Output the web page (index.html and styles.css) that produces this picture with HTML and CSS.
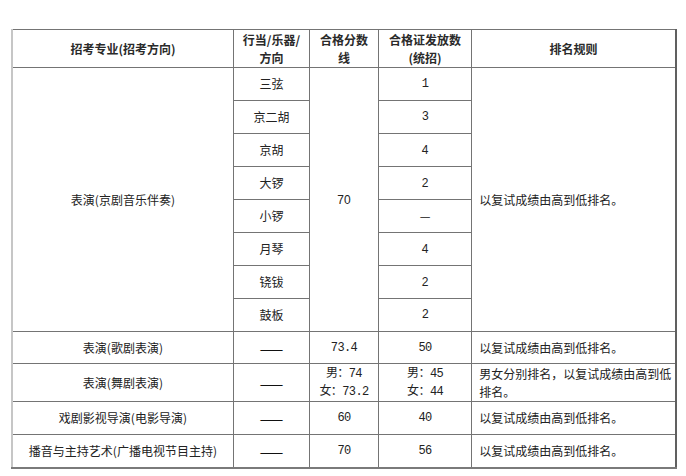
FILE: index.html
```html
<!DOCTYPE html>
<html lang="zh">
<head>
<meta charset="utf-8">
<link rel="stylesheet" href="styles.css">
</head>
<body>
<table class="grid">
  <colgroup>
    <col class="c1"><col class="c2"><col class="c3"><col class="c4"><col class="c5">
  </colgroup>
  <thead>
    <tr class="head">
      <th>招考专业(招考方向)</th>
      <th>行当/乐器/<br>方向</th>
      <th>合格分数<br>线</th>
      <th>合格证发放数<br>(统招)</th>
      <th>排名规则</th>
    </tr>
  </thead>
  <tbody>
    <tr class="sub">
      <td rowspan="8">表演(京剧音乐伴奏)</td>
      <td>三弦</td>
      <td rowspan="8" class="sans">70</td>
      <td class="num">1</td>
      <td rowspan="8" class="rule">以复试成绩由高到低排名。</td>
    </tr>
    <tr class="sub"><td>京二胡</td><td class="num">3</td></tr>
    <tr class="sub"><td>京胡</td><td class="sans">4</td></tr>
    <tr class="sub"><td>大锣</td><td class="sans">2</td></tr>
    <tr class="sub"><td>小锣</td><td class="dash">—</td></tr>
    <tr class="sub"><td>月琴</td><td class="sans">4</td></tr>
    <tr class="sub"><td>铙钹</td><td class="sans">2</td></tr>
    <tr class="sub"><td>鼓板</td><td class="num">2</td></tr>
    <tr class="r32">
      <td>表演(歌剧表演)</td>
      <td class="dash long">——</td>
      <td class="num">73.4</td>
      <td class="num">50</td>
      <td class="rule">以复试成绩由高到低排名。</td>
    </tr>
    <tr class="r38">
      <td>表演(舞剧表演)</td>
      <td class="dash long">——</td>
      <td class="num two">男：74<br>女：73.2</td>
      <td class="num two">男：45<br>女：44</td>
      <td class="rule two">男女分别排名，以复试成绩由高到低排名。</td>
    </tr>
    <tr class="r33">
      <td>戏剧影视导演(电影导演)</td>
      <td class="dash long">——</td>
      <td class="num">60</td>
      <td class="num">40</td>
      <td class="rule">以复试成绩由高到低排名。</td>
    </tr>
    <tr class="r33">
      <td>播音与主持艺术(广播电视节目主持)</td>
      <td class="dash long">——</td>
      <td class="num">70</td>
      <td class="num">56</td>
      <td class="rule">以复试成绩由高到低排名。</td>
    </tr>
  </tbody>
</table>
</body>
</html>
```
FILE: styles.css
```css
html, body {
  margin: 0;
  padding: 0;
  background: #ffffff;
}
body {
  padding: 29px 0 0 11px;
  font-family: "Noto Sans CJK SC", "Noto Sans", sans-serif;
  font-size: 12px;
  color: #222222;
}
.grid {
  border-collapse: collapse;
  table-layout: fixed;
  width: 666px;
  border-top: 1px solid #5e5e5e;
  border-left: 2px solid #c6c6c6;
  border-right: 2px solid #606060;
  border-bottom: 2px solid #7a7a7a;
}
.c1 { width: 221px; }
.c2 { width: 76px; }
.c3 { width: 69px; }
.c4 { width: 93px; }
.c5 { width: 204px; }
.grid th, .grid td {
  border: 1px solid #747474;
  padding: 0;
  text-align: center;
  vertical-align: middle;
  line-height: 18px;
  font-weight: normal;
  overflow: hidden;
}
.grid th {
  font-weight: bold;
  color: #2a2a2a;
}
.head { height: 38px; }
.sub { height: 33px; }
.r32 { height: 32px; }
.r38 { height: 38px; }
.r33 { height: 33px; }
.grid td.rule {
  text-align: left;
  padding: 0 0 0 7px;
}
.grid td.two {
  line-height: 18px;
}
.num {
  font-family: "Liberation Mono", "Noto Sans CJK SC", monospace;
  font-size: 12px;
  letter-spacing: -0.6px;
}
.sans {
  font-family: "Liberation Sans", sans-serif;
}
.dash {
  font-family: "Noto Sans CJK SC", sans-serif;
  font-size: 12px;
  color: #111111;
}
.grid td.long {
  font-size: 14px;
}
```
